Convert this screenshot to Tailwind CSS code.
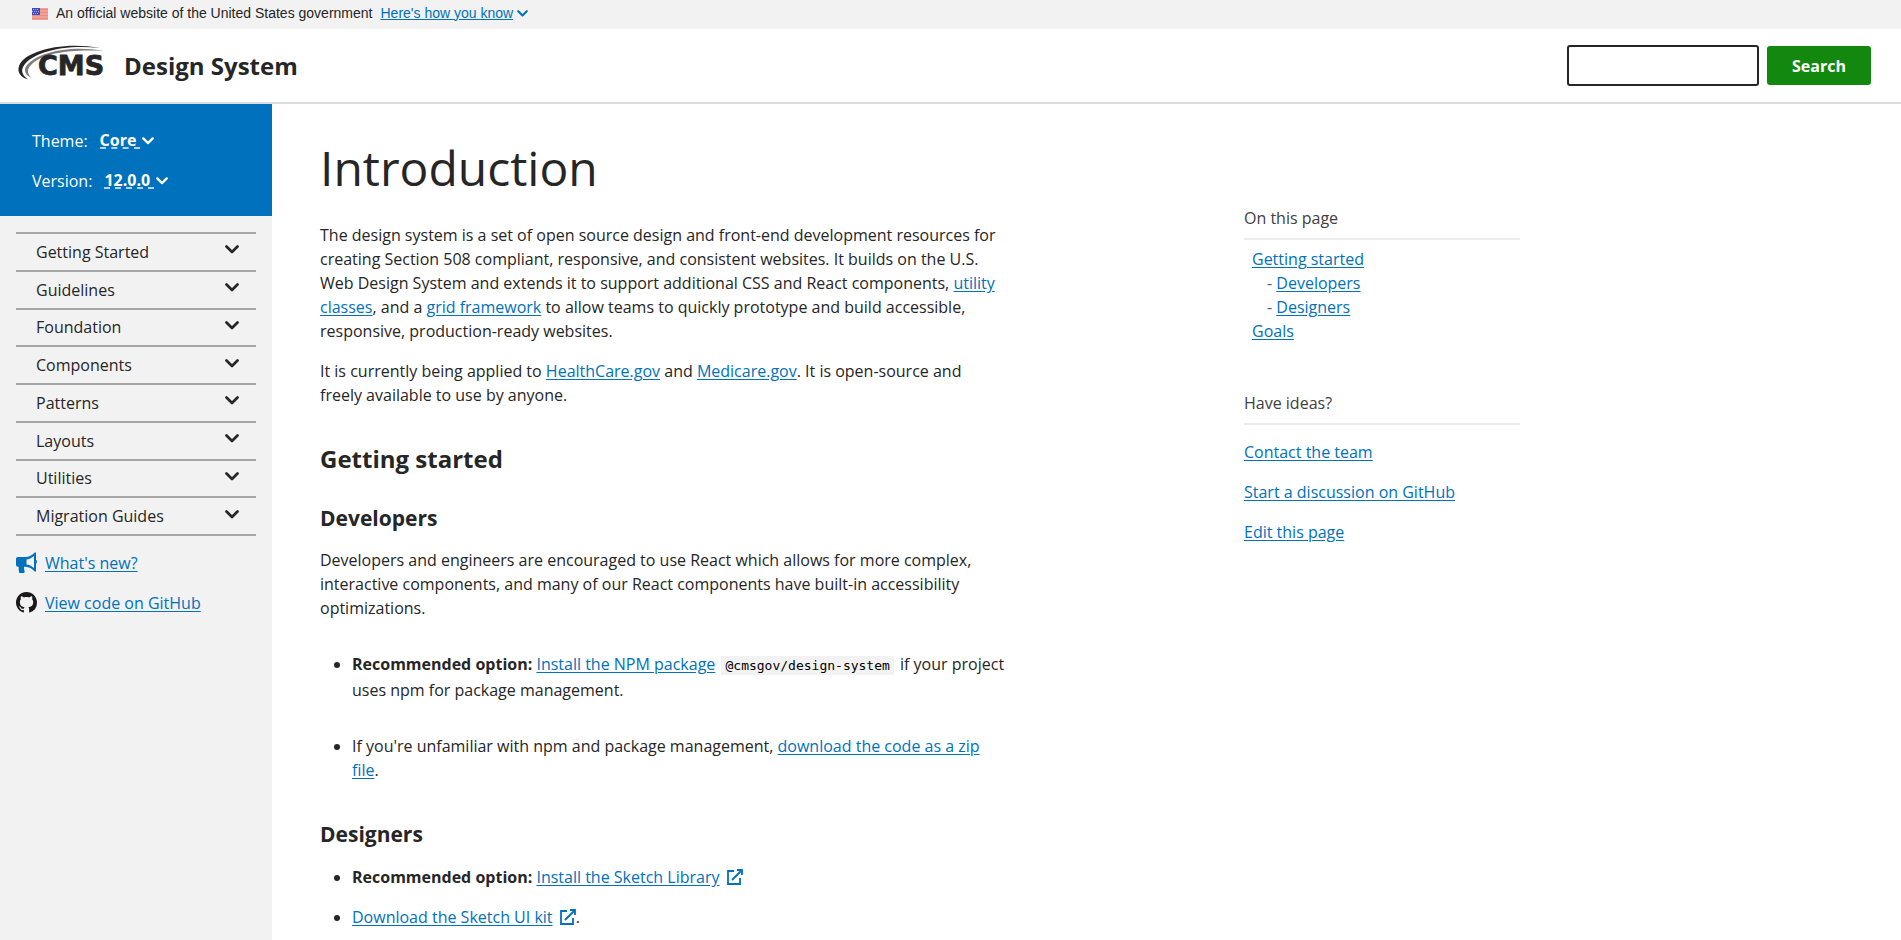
<!DOCTYPE html>
<html lang="en">
<head>
<meta charset="utf-8">
<title>Introduction - CMS Design System</title>
<script src="https://cdn.jsdelivr.net/npm/@tailwindcss/browser@4"></script>
</head>
<body class="flex min-h-screen flex-col bg-white font-['Open_Sans',sans-serif] text-base leading-6 text-[#262626]">
<svg class="hidden">
  <symbol id="chev" viewBox="0 0 14 9"><path d="M1.5 1.5 7 7l5.5-5.5" fill="none" stroke="currentColor" stroke-width="2.7" stroke-linecap="round" stroke-linejoin="round"/></symbol>
  <symbol id="ext" viewBox="0 0 16 16"><path d="M7 2H1v13h12V9M5 11 14.500 1.500M10 1h5v5" fill="none" stroke="currentColor" stroke-width="1.800"/></symbol>
</svg>

<div class="flex h-[29px] items-center bg-[#f2f2f2] pb-1 pl-8 font-['Liberation_Sans',sans-serif] text-sm">
  <svg class="mt-0.5 h-3 w-4" viewBox="0 0 16 12"><path fill="#f3a093" d="M0 0h16v12H0z"/><path stroke="#e58f84" d="M0 1.500h16M0 4.500h16M0 7.500h16M0 10.500h16"/><path fill="#3f4cc0" d="M0 0h8v7H0z"/><path stroke="#a9b0ee" stroke-dasharray="1 1" d="M1 1.500h6M0 3.500h7M1 5.500h6"/></svg>
  <p class="ml-2">An official website of the United States government</p>
  <button class="ml-2 flex items-center gap-1 text-[#0071bc]"><span class="underline">Here's how you know</span><svg class="mt-0.5 h-[7px] w-[11px]"><use href="#chev"/></svg></button>
</div>

<header class="flex h-[75px] items-center border-b-2 border-[#dcdcdc] pr-[30px] pl-[18px]">
  <a href="#" class="flex items-center gap-2.5">
    <svg class="mb-2 h-9 w-24 overflow-visible" viewBox="0 0 96 36" fill="#262626" aria-label="CMS">
      <path d="M10 35.500C2 33-1 28 1 22 6 8 42-3 82 4 44 0 16 9 7 20c-5 6-3 11 3 15.500z"/>
      <path d="M14 34C7 31 5 26 9 21 21 8 52 1 86 7 54 5 27 9 15 19c-6 5-7 10-1 15z" opacity=".6"/>
      <text x="20" y="31" font-family="DejaVu Sans" font-weight="700" font-size="27" stroke="#262626" stroke-width=".8">CMS</text>
    </svg>
    <span class="text-2xl font-bold">Design System</span>
  </a>
  <form class="ml-auto flex items-center gap-2">
    <input type="search" aria-label="Search" class="h-[41px] w-48 rounded-[3px] border-2 border-[#262626] px-2">
    <button type="button" class="h-[39px] w-[104px] rounded-[3px] bg-[#12890e] font-bold text-white">Search</button>
  </form>
</header>

<div class="flex grow">
  <aside class="w-[272px] shrink-0 bg-[#f2f2f2]">
    <div class="flex h-28 flex-col gap-4 bg-[#0071bc] px-8 pt-[25px] text-white">
      <div class="flex gap-3"><span>Theme:</span><button class="flex items-center gap-0.5 font-bold"><span class="border-b-2 border-dashed border-white/70 pr-1 leading-[14px]">Core</span><svg class="h-2 w-3"><use href="#chev"/></svg></button></div>
      <div class="flex gap-3"><span>Version:</span><button class="flex items-center gap-0.5 font-bold"><span class="border-b-2 border-dashed border-white/70 pr-1 leading-[14px]">12.0.0</span><svg class="h-2 w-3"><use href="#chev"/></svg></button></div>
    </div>
    <nav class="mx-4 mt-4 grid h-[304px] auto-rows-fr border-t-2 border-[#a6a6a6]">
      <button class="flex items-center justify-between border-b-2 border-[#a6a6a6] pr-[17px] pl-5">Getting Started<svg class="mb-1 h-[9px] w-[14px]"><use href="#chev"/></svg></button>
      <button class="flex items-center justify-between border-b-2 border-[#a6a6a6] pr-[17px] pl-5">Guidelines<svg class="mb-1 h-[9px] w-[14px]"><use href="#chev"/></svg></button>
      <button class="flex items-center justify-between border-b-2 border-[#a6a6a6] pr-[17px] pl-5">Foundation<svg class="mb-1 h-[9px] w-[14px]"><use href="#chev"/></svg></button>
      <button class="flex items-center justify-between border-b-2 border-[#a6a6a6] pr-[17px] pl-5">Components<svg class="mb-1 h-[9px] w-[14px]"><use href="#chev"/></svg></button>
      <button class="flex items-center justify-between border-b-2 border-[#a6a6a6] pr-[17px] pl-5">Patterns<svg class="mb-1 h-[9px] w-[14px]"><use href="#chev"/></svg></button>
      <button class="flex items-center justify-between border-b-2 border-[#a6a6a6] pr-[17px] pl-5">Layouts<svg class="mb-1 h-[9px] w-[14px]"><use href="#chev"/></svg></button>
      <button class="flex items-center justify-between border-b-2 border-[#a6a6a6] pr-[17px] pl-5">Utilities<svg class="mb-1 h-[9px] w-[14px]"><use href="#chev"/></svg></button>
      <button class="flex items-center justify-between border-b-2 border-[#a6a6a6] pr-[17px] pl-5">Migration Guides<svg class="mb-1 h-[9px] w-[14px]"><use href="#chev"/></svg></button>
    </nav>
    <div class="mx-4 mt-[15px] flex flex-col gap-4 text-[#0071bc]">
      <a href="#" class="flex items-center gap-2"><svg class="mb-0.5 h-[21px] w-[21px]" viewBox="0 0 21 21" fill="currentColor"><path d="M2 5h7.500C13 5 16 3.500 18.500.800 19.200 0 20 .300 20 1.200v6.500c1.300.8 1.300 3.200 0 4v7.100c0 1-.8 1.200-1.500.5C16 16.500 13 15 9.500 14.800H8c0 2 .2 3 .6 4.200.2.800-.2 2-1 2H4.300c-.8 0-1.200-.4-1.300-1-.3-1.700-.5-3.200-.3-5.200H2c-1.200 0-2-.8-2-2V7c0-1.200.8-2 2-2zm8.500 2.500v5c2.500.2 5 1.500 7.500 3.500V4c-2.500 2-5 3.300-7.500 3.500z"/></svg><span class="underline underline-offset-2">What's new?</span></a>
      <a href="#" class="flex items-center gap-2"><svg class="mb-0.5 h-[21px] w-[21px] text-[#191717]" viewBox="0 0 16 16" fill="currentColor"><path d="M8 0C3.580 0 0 3.580 0 8c0 3.540 2.290 6.530 5.470 7.590.4.070.55-.17.55-.38 0-.19-.01-.82-.01-1.490-2.010.37-2.530-.49-2.690-.94-.09-.23-.48-.94-.82-1.130-.28-.15-.68-.52-.01-.53.63-.01 1.080.58 1.230.82.72 1.210 1.870.87 2.330.66.070-.52.28-.87.51-1.070-1.780-.2-3.640-.89-3.640-3.950 0-.87.31-1.590.82-2.150-.08-.2-.36-1.020.08-2.120 0 0 .67-.21 2.200.82.64-.18 1.320-.27 2-.27s1.360.09 2 .27c1.530-1.040 2.200-.82 2.200-.82.44 1.100.16 1.920.08 2.120.51.56.82 1.270.82 2.150 0 3.070-1.870 3.750-3.650 3.950.29.25.54.73.54 1.480 0 1.070-.01 1.930-.01 2.200 0 .21.15.46.55.38A8.010 8.010 0 0 0 16 8c0-4.420-3.580-8-8-8z"/></svg><span class="underline underline-offset-2">View code on GitHub</span></a>
    </div>
  </aside>

  <div class="flex max-w-[1248px] grow justify-between pl-12">
    <main class="max-w-[686px]">
      <h1 class="mt-[33px] text-5xl leading-[62px]">Introduction</h1>
      <p class="mt-6">The design system is a set of open source design and front-end development resources for creating Section 508 compliant, responsive, and consistent websites. It builds on the U.S. Web Design System and extends it to support additional CSS and React components, <a href="#" class="text-[#0071bc] underline underline-offset-2">utility classes</a>, and a <a href="#" class="text-[#0071bc] underline underline-offset-2">grid framework</a> to allow teams to quickly prototype and build accessible, responsive, production-ready websites.</p>
      <p class="mt-4">It is currently being applied to <a href="#" class="text-[#0071bc] underline underline-offset-2">HealthCare.gov</a> and <a href="#" class="text-[#0071bc] underline underline-offset-2">Medicare.gov</a>. It is open-source and freely available to use by anyone.</p>
      <h2 class="mt-9 text-2xl leading-8 font-bold">Getting started</h2>
      <h3 class="mt-[29px] text-[21px] leading-7 font-bold">Developers</h3>
      <p class="mt-4">Developers and engineers are encouraged to use React which allows for more complex, interactive components, and many of our React components have built-in accessibility optimizations.</p>
      <ul class="mt-8 flex list-disc flex-col gap-8 pl-8">
        <li><b>Recommended option:</b> <a href="#" class="text-[#0071bc] underline underline-offset-2">Install the NPM package</a> <code class="mx-0.5 bg-[#f2f2f2] px-1 py-0.5 font-['DejaVu_Sans_Mono',monospace] text-[13px] text-black">@cmsgov/design-system</code> if your project uses npm for package management.</li>
        <li>If you're unfamiliar with npm and package management, <a href="#" class="text-[#0071bc] underline underline-offset-2">download the code as a zip file</a>.</li>
      </ul>
      <h3 class="mt-[38px] text-[21px] leading-7 font-bold">Designers</h3>
      <ul class="mt-[17px] flex list-disc flex-col gap-4 pl-8">
        <li><b>Recommended option:</b> <a href="#" class="text-[#0071bc]"><span class="underline underline-offset-2">Install the Sketch Library</span> <svg class="mb-1 ml-[3px] inline h-4 w-4"><use href="#ext"/></svg></a></li>
        <li><a href="#" class="text-[#0071bc]"><span class="underline underline-offset-2">Download the Sketch UI kit</span> <svg class="mb-1 ml-[3px] inline h-4 w-4"><use href="#ext"/></svg></a>.</li>
      </ul>
    </main>
    <aside class="w-[276px] shrink-0 pt-[102px]">
      <h2 class="border-b-2 border-[#ececec] pb-2 text-[#404040]">On this page</h2>
      <ul class="mt-[7px] pl-2 text-[#5a5a5a]">
        <li><a href="#" class="text-[#0071bc] underline underline-offset-2">Getting started</a></li>
        <li class="pl-[15px]">- <a href="#" class="text-[#0071bc] underline underline-offset-2">Developers</a></li>
        <li class="pl-[15px]">- <a href="#" class="text-[#0071bc] underline underline-offset-2">Designers</a></li>
        <li><a href="#" class="text-[#0071bc] underline underline-offset-2">Goals</a></li>
      </ul>
      <h2 class="mt-12 border-b-2 border-[#ececec] pb-2 text-[#404040]">Have ideas?</h2>
      <ul class="mt-[15px] flex flex-col gap-4 text-[#0071bc] underline underline-offset-2">
        <li><a href="#">Contact the team</a></li>
        <li><a href="#">Start a discussion on GitHub</a></li>
        <li><a href="#">Edit this page</a></li>
      </ul>
    </aside>
  </div>
</div>
</body>
</html>
